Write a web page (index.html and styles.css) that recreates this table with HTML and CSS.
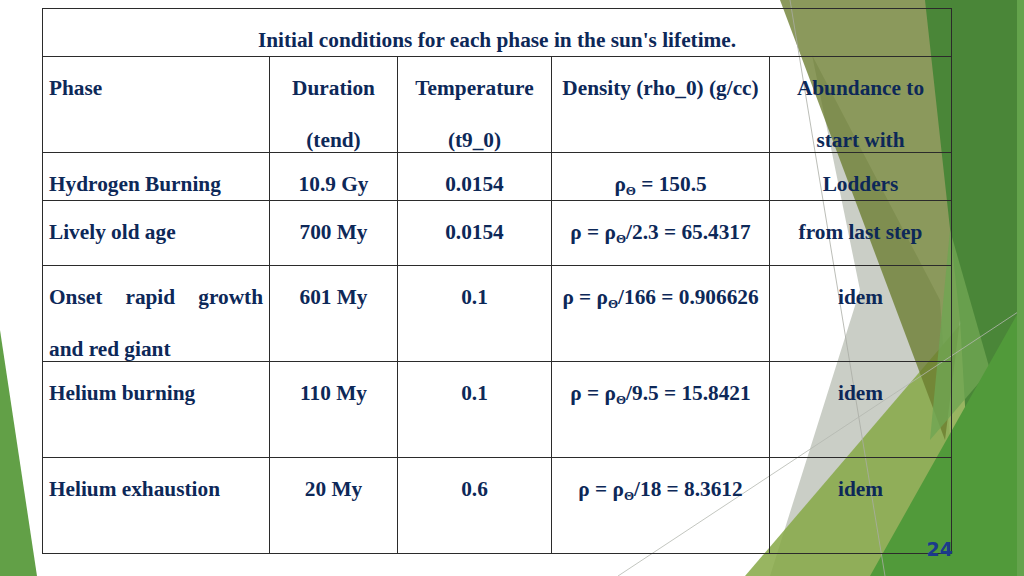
FILE: index.html
```html
<!DOCTYPE html>
<html>
<head>
<meta charset="utf-8">
<link rel="stylesheet" href="styles.css">
</head>
<body>
<div class="slide">
  <svg class="deco" width="1024" height="576" viewBox="0 0 1024 576">
    <polygon points="0,330 37,576 0,576" fill="#62a047"/>
    <polygon points="812,55 860,290 770,576 960,576 940,300" fill="#b3b9ae" opacity="0.7"/>
    <polygon points="745,576 1024,250 1024,576" fill="#86a845" opacity="0.85"/>
    <polygon points="780,0 1000,0 945,440" fill="#6a7c2e" opacity="0.78"/>
    <polygon points="925,0 1024,0 1024,576 975,576 960,320" fill="#4a8638"/>
    <polygon points="950,230 990,370 930,440" fill="#6fa552" opacity="0.8"/>
    <polygon points="870,576 1024,302 1024,576" fill="#519a3a"/>
    <line x1="790" y1="0" x2="885" y2="576" stroke="#a9aca5" stroke-width="0.8"/>
    <line x1="618" y1="576" x2="1024" y2="308" stroke="#b4b7b0" stroke-width="0.8"/>
    <rect x="1017" y="0" width="7" height="576" fill="#64a34c"/>
  </svg>

  <div class="grid">
    <div class="cell title">Initial conditions for each phase in the sun's lifetime.</div>

    <div class="cell left">Phase</div>
    <div class="cell">Duration<br>(tend)</div>
    <div class="cell">Temperature<br>(t9_0)</div>
    <div class="cell">Density (rho_0) (g/cc)</div>
    <div class="cell">Abundance to<br>start with</div>

    <div class="cell left">Hydrogen Burning</div>
    <div class="cell">10.9 Gy</div>
    <div class="cell">0.0154</div>
    <div class="cell">ρ<sub>Θ</sub> = 150.5</div>
    <div class="cell">Lodders</div>

    <div class="cell left">Lively old age</div>
    <div class="cell">700 My</div>
    <div class="cell">0.0154</div>
    <div class="cell">ρ = ρ<sub>Θ</sub>/2.3 = 65.4317</div>
    <div class="cell">from last step</div>

    <div class="cell left"><span class="just">Onset rapid growth</span>and red giant</div>
    <div class="cell">601 My</div>
    <div class="cell">0.1</div>
    <div class="cell">ρ = ρ<sub>Θ</sub>/166 = 0.906626</div>
    <div class="cell">idem</div>

    <div class="cell left">Helium burning</div>
    <div class="cell">110 My</div>
    <div class="cell">0.1</div>
    <div class="cell">ρ = ρ<sub>Θ</sub>/9.5 = 15.8421</div>
    <div class="cell">idem</div>

    <div class="cell left">Helium exhaustion</div>
    <div class="cell">20 My</div>
    <div class="cell">0.6</div>
    <div class="cell">ρ = ρ<sub>Θ</sub>/18 = 8.3612</div>
    <div class="cell">idem</div>
  </div>

  <div class="page">24</div>
</div>
</body>
</html>
```

FILE: styles.css
```css
html, body {
  margin: 0;
  padding: 0;
}

body {
  width: 1024px;
  height: 576px;
  overflow: hidden;
  background: #ffffff;
}

.slide {
  position: relative;
  width: 1024px;
  height: 576px;
  padding: 8px 0 0 42px;
  box-sizing: border-box;
}

.deco {
  position: absolute;
  left: 0;
  top: 0;
}

.grid {
  position: relative;
  display: grid;
  grid-template-columns: 227px 128px 154px 218px 182px;
  grid-template-rows: 48px 96px 48px 65px 96px 96px 96px;
  width: 910px;
  box-sizing: border-box;
  border-left: 1.5px solid #2b2b2b;
  border-top: 1.5px solid #2b2b2b;
  font-family: "Liberation Serif", "Times New Roman", serif;
  font-weight: bold;
  font-size: 21.3px;
  line-height: 52px;
  color: #0d2858;
}

.cell {
  box-sizing: border-box;
  border-right: 1.5px solid #2b2b2b;
  border-bottom: 1.5px solid #2b2b2b;
  padding: 5px 6px 0 6px;
  text-align: center;
  min-height: 0;
  overflow: visible;
  white-space: nowrap;
}

.cell.title {
  grid-column: 1 / -1;
  padding-top: 5px;
}

.cell.left {
  text-align: left;
}

.just {
  display: block;
  text-align: justify;
  text-align-last: justify;
}

sub {
  font-size: 13px;
  vertical-align: -4px;
  line-height: 0;
}

.page {
  position: absolute;
  right: 71px;
  bottom: 17px;
  font-family: "DejaVu Sans", sans-serif;
  font-weight: bold;
  font-size: 19px;
  line-height: 20px;
  color: #1c3a8c;
}
```
